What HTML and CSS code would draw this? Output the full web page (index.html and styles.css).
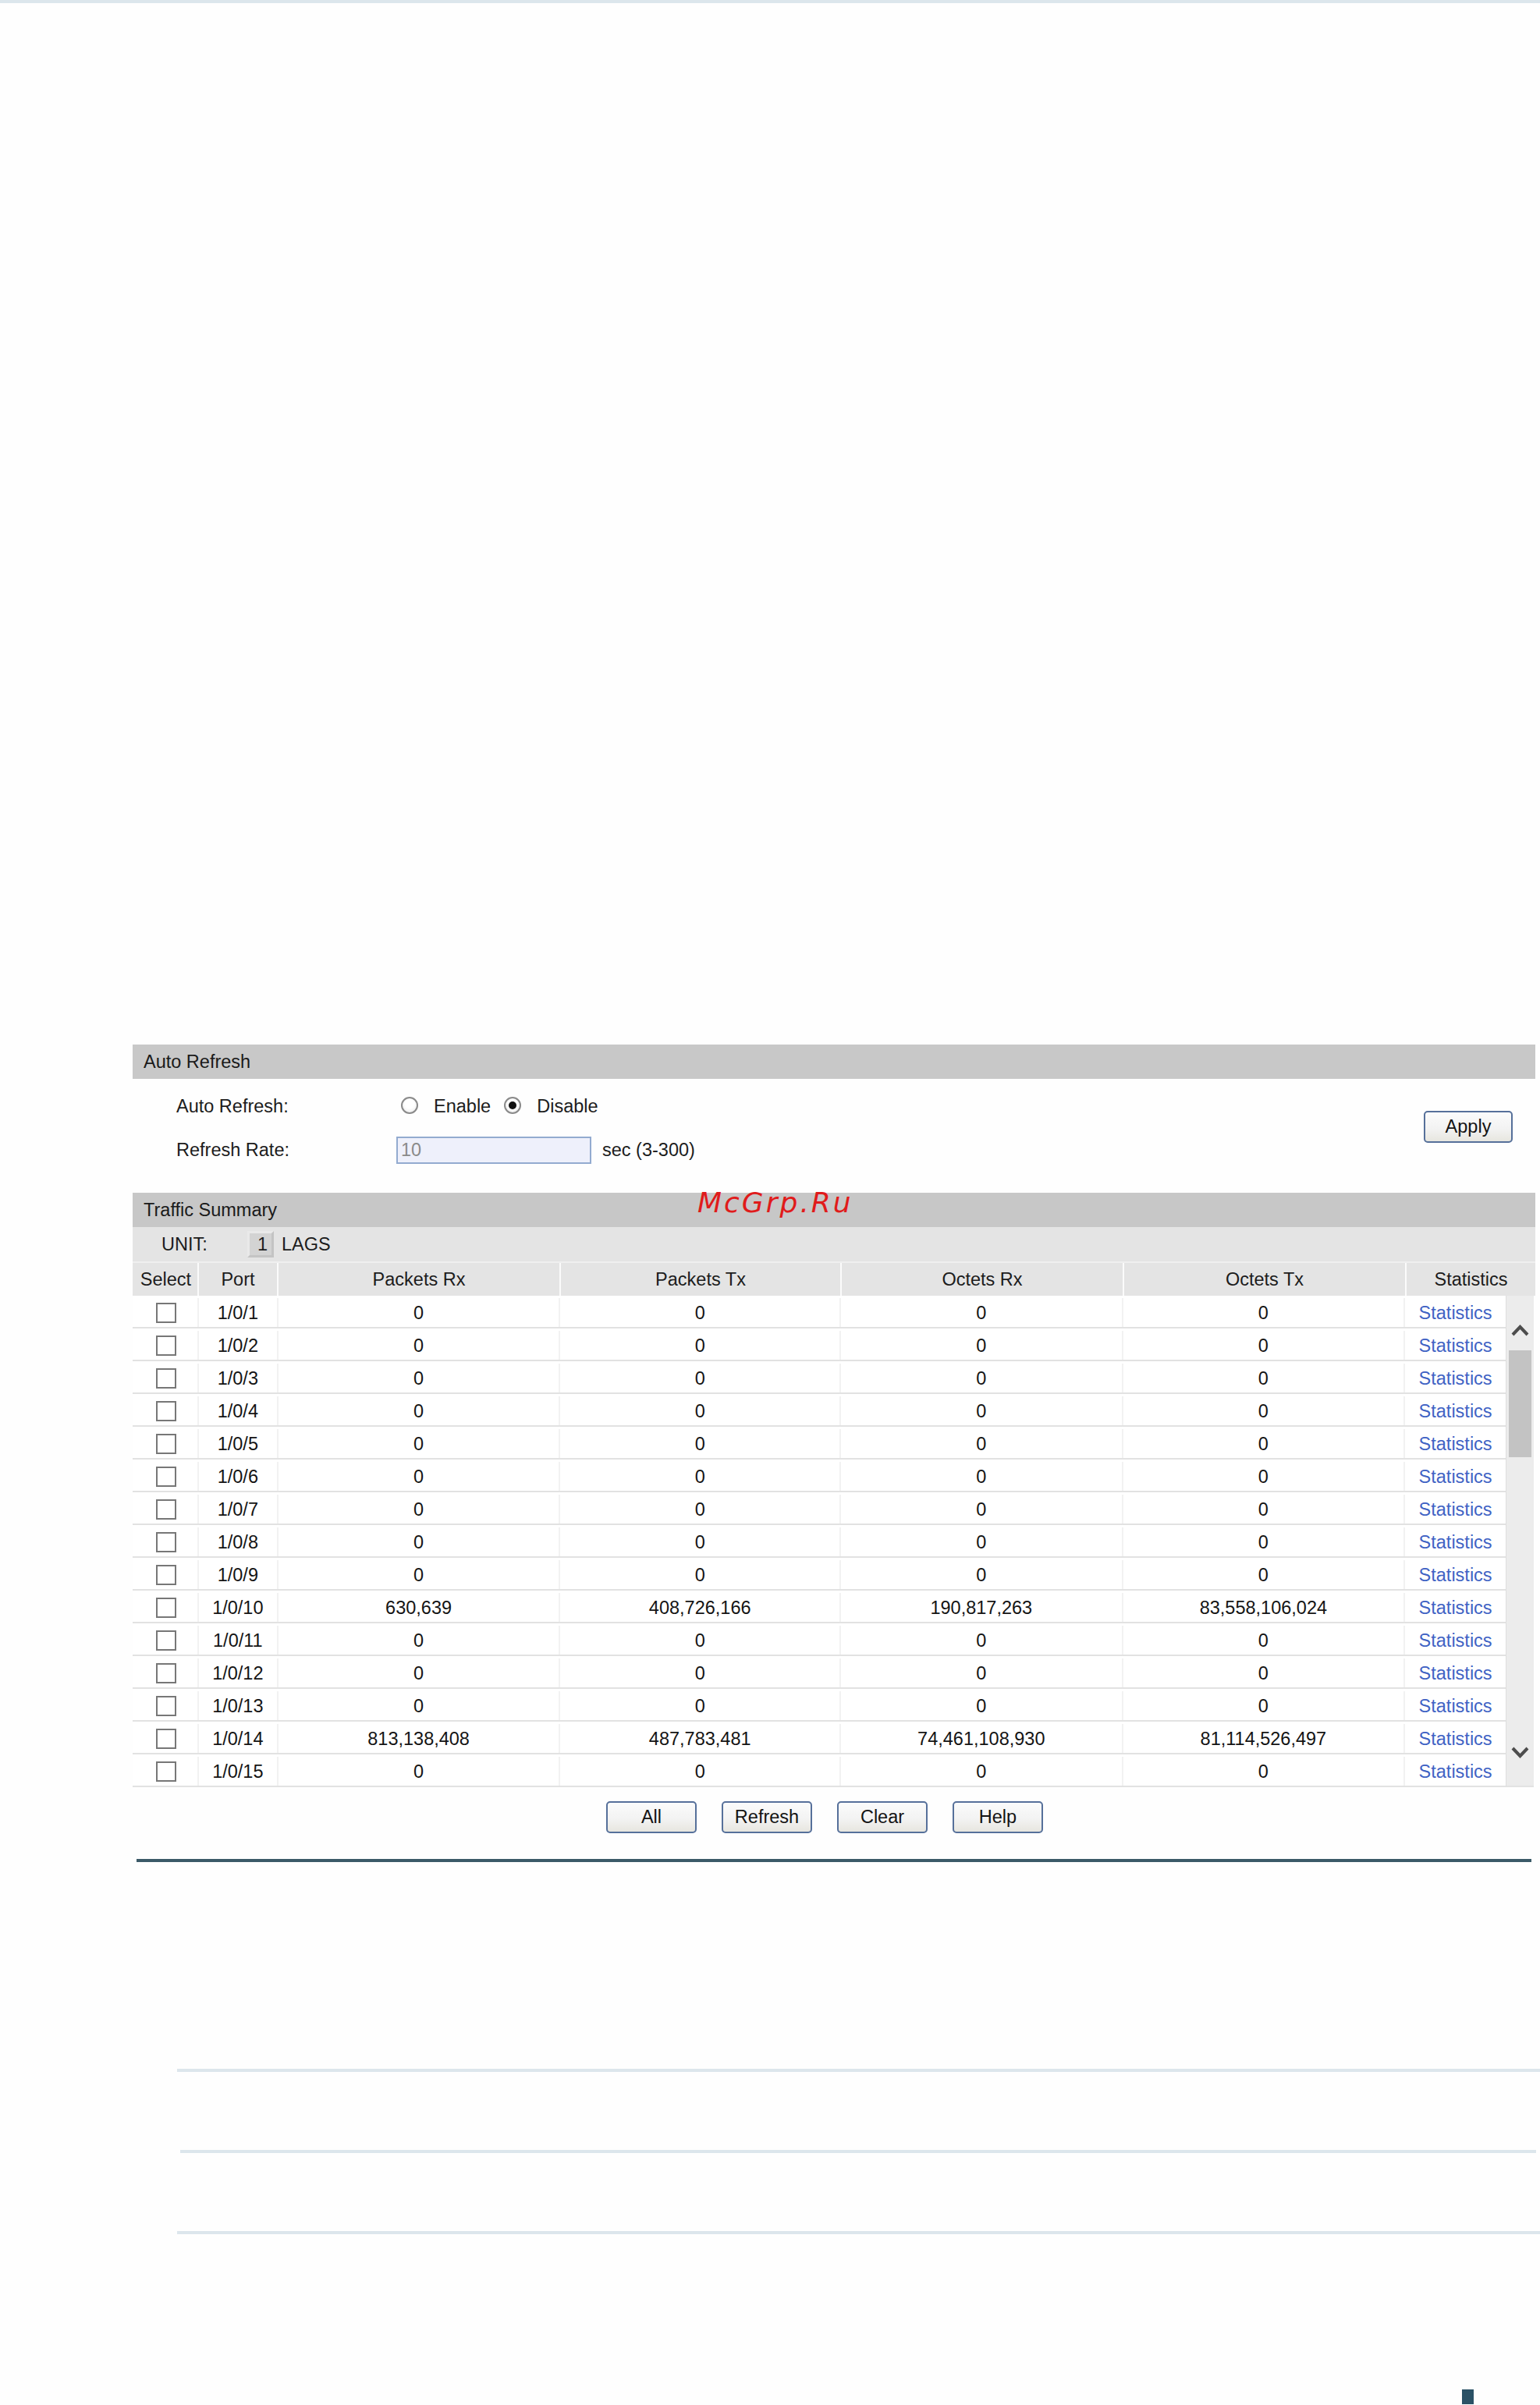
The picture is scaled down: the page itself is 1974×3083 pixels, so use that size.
FILE: index.html
```html
<!DOCTYPE html>
<html>
<head>
<meta charset="utf-8">
<title>Traffic Summary</title>
<link rel="stylesheet" href="styles.css">
</head>
<body>
<div class="topbar"></div>
<div class="panel">
  <div class="sec-head">Auto Refresh</div>
  <div class="form">
    <div class="form-rows">
      <div class="frow">
        <span class="flabel">Auto Refresh:</span>
        <span class="radio first"></span><span class="rlabel">Enable</span>
        <span class="radio on"></span><span class="rlabel">Disable</span>
      </div>
      <div class="frow">
        <span class="flabel">Refresh Rate:</span>
        <span class="input">10</span>
        <span class="unit-hint">sec (3-300)</span>
      </div>
    </div>
    <span class="btn apply">Apply</span>
  </div>
  <div class="sec-head ts">Traffic Summary<span class="watermark">McGrp.Ru</span></div>
  <div class="unitrow">
    <span class="unit-label">UNIT:</span>
    <span class="unit-box">1</span>
    <span class="lags">LAGS</span>
  </div>
  <div class="thead">
    <div class="c c1">Select</div>
    <div class="c c2">Port</div>
    <div class="c c3">Packets Rx</div>
    <div class="c c4">Packets Tx</div>
    <div class="c c5">Octets Rx</div>
    <div class="c c6">Octets Tx</div>
    <div class="c c7h">Statistics</div>
  </div>
  <div class="tbody-wrap">
    <div class="tbody">
      <div class="row"><div class="c c1"><span class="cb"></span></div><div class="c c2">1/0/1</div><div class="c c3">0</div><div class="c c4">0</div><div class="c c5">0</div><div class="c c6">0</div><div class="c c7"><span class="link">Statistics</span></div></div>
      <div class="row"><div class="c c1"><span class="cb"></span></div><div class="c c2">1/0/2</div><div class="c c3">0</div><div class="c c4">0</div><div class="c c5">0</div><div class="c c6">0</div><div class="c c7"><span class="link">Statistics</span></div></div>
      <div class="row"><div class="c c1"><span class="cb"></span></div><div class="c c2">1/0/3</div><div class="c c3">0</div><div class="c c4">0</div><div class="c c5">0</div><div class="c c6">0</div><div class="c c7"><span class="link">Statistics</span></div></div>
      <div class="row"><div class="c c1"><span class="cb"></span></div><div class="c c2">1/0/4</div><div class="c c3">0</div><div class="c c4">0</div><div class="c c5">0</div><div class="c c6">0</div><div class="c c7"><span class="link">Statistics</span></div></div>
      <div class="row"><div class="c c1"><span class="cb"></span></div><div class="c c2">1/0/5</div><div class="c c3">0</div><div class="c c4">0</div><div class="c c5">0</div><div class="c c6">0</div><div class="c c7"><span class="link">Statistics</span></div></div>
      <div class="row"><div class="c c1"><span class="cb"></span></div><div class="c c2">1/0/6</div><div class="c c3">0</div><div class="c c4">0</div><div class="c c5">0</div><div class="c c6">0</div><div class="c c7"><span class="link">Statistics</span></div></div>
      <div class="row"><div class="c c1"><span class="cb"></span></div><div class="c c2">1/0/7</div><div class="c c3">0</div><div class="c c4">0</div><div class="c c5">0</div><div class="c c6">0</div><div class="c c7"><span class="link">Statistics</span></div></div>
      <div class="row"><div class="c c1"><span class="cb"></span></div><div class="c c2">1/0/8</div><div class="c c3">0</div><div class="c c4">0</div><div class="c c5">0</div><div class="c c6">0</div><div class="c c7"><span class="link">Statistics</span></div></div>
      <div class="row"><div class="c c1"><span class="cb"></span></div><div class="c c2">1/0/9</div><div class="c c3">0</div><div class="c c4">0</div><div class="c c5">0</div><div class="c c6">0</div><div class="c c7"><span class="link">Statistics</span></div></div>
      <div class="row"><div class="c c1"><span class="cb"></span></div><div class="c c2">1/0/10</div><div class="c c3">630,639</div><div class="c c4">408,726,166</div><div class="c c5">190,817,263</div><div class="c c6">83,558,106,024</div><div class="c c7"><span class="link">Statistics</span></div></div>
      <div class="row"><div class="c c1"><span class="cb"></span></div><div class="c c2">1/0/11</div><div class="c c3">0</div><div class="c c4">0</div><div class="c c5">0</div><div class="c c6">0</div><div class="c c7"><span class="link">Statistics</span></div></div>
      <div class="row"><div class="c c1"><span class="cb"></span></div><div class="c c2">1/0/12</div><div class="c c3">0</div><div class="c c4">0</div><div class="c c5">0</div><div class="c c6">0</div><div class="c c7"><span class="link">Statistics</span></div></div>
      <div class="row"><div class="c c1"><span class="cb"></span></div><div class="c c2">1/0/13</div><div class="c c3">0</div><div class="c c4">0</div><div class="c c5">0</div><div class="c c6">0</div><div class="c c7"><span class="link">Statistics</span></div></div>
      <div class="row"><div class="c c1"><span class="cb"></span></div><div class="c c2">1/0/14</div><div class="c c3">813,138,408</div><div class="c c4">487,783,481</div><div class="c c5">74,461,108,930</div><div class="c c6">81,114,526,497</div><div class="c c7"><span class="link">Statistics</span></div></div>
      <div class="row"><div class="c c1"><span class="cb"></span></div><div class="c c2">1/0/15</div><div class="c c3">0</div><div class="c c4">0</div><div class="c c5">0</div><div class="c c6">0</div><div class="c c7"><span class="link">Statistics</span></div></div>
    </div>
    <div class="scrollbar">
      <svg class="arrow up" width="23" height="18" viewBox="0 0 23 18"><polyline points="2,15 11.5,5 21,15" fill="none" stroke="#4d4d4d" stroke-width="4"/></svg>
      <div class="thumb"></div>
      <svg class="arrow down" width="23" height="18" viewBox="0 0 23 18"><polyline points="2,3 11.5,13 21,3" fill="none" stroke="#4d4d4d" stroke-width="4"/></svg>
    </div>
  </div>
  <div class="actions">
    <span class="btn">All</span>
    <span class="btn">Refresh</span>
    <span class="btn">Clear</span>
    <span class="btn">Help</span>
  </div>
</div>
<div class="rule-dark"></div>
<div class="rule-light r1"></div>
<div class="rule-light r2"></div>
<div class="rule-light r3"></div>
<div class="corner-mark"></div>
</body>
</html>
```
FILE: styles.css
```css
html, body {
  margin: 0;
  padding: 0;
  background: #fefefe;
}
body {
  width: 1974px;
  height: 3083px;
  overflow: hidden;
  font-family: "Liberation Sans", Arial, sans-serif;
  font-size: 23.5px;
  color: #1c1c1c;
}
.topbar {
  height: 4px;
  background: #dce6ec;
}
.panel {
  margin: 1335px 0 0 170px;
  width: 1798px;
}
.sec-head {
  height: 44px;
  line-height: 44px;
  background: #c8c8c8;
  padding-left: 14px;
  color: #1a1a1a;
}
.sec-head.ts {
  position: relative;
  background: #c7c7c7;
}
.watermark {
  position: absolute;
  left: 724px;
  top: -7px;
  line-height: 40px;
  font-family: "DejaVu Sans", sans-serif;
  font-style: italic;
  font-size: 36px;
  letter-spacing: 3px;
  color: #e01b1b;
}
.form {
  display: flex;
  height: 146px;
}
.form-rows {
  display: flex;
  flex-direction: column;
  gap: 14px;
  padding: 14px 0 0 56px;
}
.frow {
  display: flex;
  align-items: center;
  height: 42px;
  line-height: 42px;
}
.flabel {
  width: 282px;
}
.radio {
  width: 22px;
  height: 22px;
  box-sizing: border-box;
  border: 2px solid #8a8a8a;
  border-radius: 50%;
  background: radial-gradient(circle at 50% 40%, #ffffff 40%, #e6e6e6 100%);
  margin: 0 20px 2px 17px;
  position: relative;
}
.radio.first {
  margin-left: 6px;
}
.radio.on::after {
  content: "";
  position: absolute;
  left: 4px;
  top: 4px;
  width: 10px;
  height: 10px;
  border-radius: 50%;
  background: #111;
}
.input {
  width: 250px;
  height: 35px;
  line-height: 31px;
  box-sizing: border-box;
  border: 2px solid #93abd0;
  background: #eef0fb;
  color: #8a8a8a;
  padding-left: 4px;
}
.unit-hint {
  margin-left: 14px;
}
.btn {
  display: inline-flex;
  align-items: center;
  justify-content: center;
  width: 116px;
  height: 41px;
  box-sizing: border-box;
  border: 2px solid #56709a;
  border-radius: 5px;
  background: linear-gradient(#fbfbfb 0%, #f3f3f3 55%, #e7e6df 100%);
  color: #141414;
}
.btn.apply {
  width: 114px;
  margin: 41px 29px 0 auto;
}
.unitrow {
  display: flex;
  align-items: center;
  height: 44px;
  background: #e4e4e4;
  border-bottom: 2px solid #efefef;
}
.unit-label {
  margin-left: 37px;
  width: 110px;
}
.unit-box {
  width: 34px;
  height: 34px;
  box-sizing: border-box;
  border: 3px solid #e9e9e9;
  border-right-color: #c4c4c4;
  border-bottom-color: #c4c4c4;
  background: #d3d3d3;
  text-align: right;
  padding-right: 5px;
  line-height: 28px;
}
.lags {
  margin-left: 10px;
}
.thead {
  display: flex;
  height: 42px;
  line-height: 42px;
  background: #e4e4e4;
}
.c {
  box-sizing: border-box;
  text-align: center;
  white-space: nowrap;
}
.c1 { width: 83px; }
.c2 { width: 102px; }
.c3 { width: 362px; }
.c4 { width: 360px; }
.c5 { width: 362px; }
.c6 { width: 362px; }
.c7 { width: 131px; }
.c7h { width: 167px; }
.thead .c + .c {
  border-left: 2px solid #fbfbfb;
}
.thead .c1 {
  padding-left: 2px;
}
.tbody-wrap {
  display: flex;
  border-left: 2px solid #e2e2e2;
}
.tbody {
  width: 1760px;
  margin-left: -2px;
}
.row {
  display: flex;
  height: 42px;
  padding-top: 3px;
  line-height: 38px;
  box-sizing: border-box;
  border-bottom: 2px solid #e2e2e2;
  background: #ffffff;
  color: #141414;
}
.row .c + .c {
  border-left: 2px solid #f2f2f2;
}
.row .c1 {
  display: flex;
  align-items: center;
  justify-content: center;
  padding-left: 4px;
}
.cb {
  width: 26px;
  height: 26px;
  box-sizing: border-box;
  border: 2px solid #777;
  background: #fff;
}
.link {
  color: #3f63c4;
}
.scrollbar {
  width: 36px;
  height: 630px;
  box-sizing: border-box;
  background: #ececec;
  border-left: 1px solid #dedede;
  border-bottom: 2px solid #e2e2e2;
  display: flex;
  flex-direction: column;
  align-items: center;
}
.arrow.up {
  margin-top: 35px;
}
.thumb {
  margin-top: 17px;
  width: 29px;
  height: 137px;
  background: #c3c3c3;
}
.arrow.down {
  margin-top: auto;
  margin-bottom: 33px;
}
.actions {
  display: flex;
  gap: 32px;
  padding-left: 607px;
  margin-top: 18px;
}
.rule-dark {
  margin: 33px 0 0 175px;
  width: 1788px;
  height: 4px;
  background: #3b5a68;
}
.rule-light {
  height: 4px;
  background: #dce6ec;
}
.r1 {
  margin: 265px 0 0 227px;
  width: 1747px;
}
.r2 {
  margin: 100px 0 0 231px;
  width: 1738px;
}
.r3 {
  margin: 100px 0 0 227px;
  width: 1747px;
}
.corner-mark {
  margin: 199px 0 0 1874px;
  width: 15px;
  height: 19px;
  background: #2b5266;
}
```
